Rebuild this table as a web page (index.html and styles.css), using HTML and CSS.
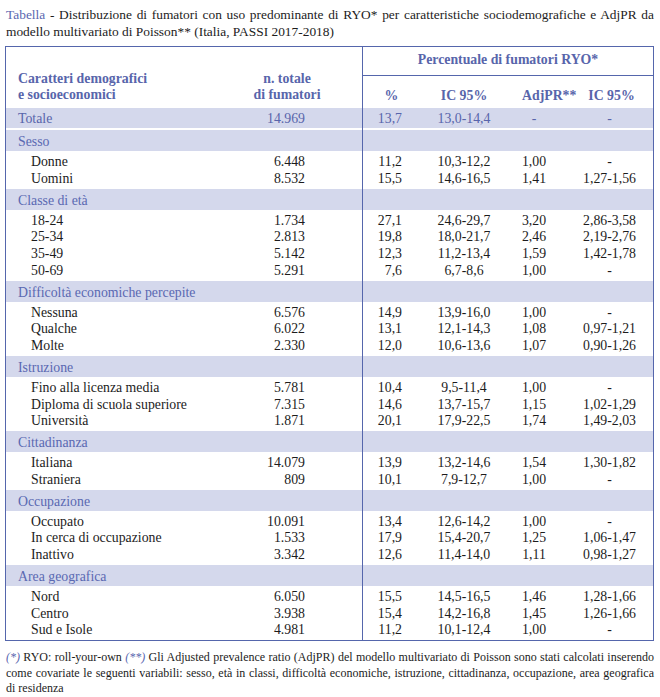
FILE: index.html
```html
<!DOCTYPE html>
<html lang="it">
<head>
<meta charset="utf-8">
<title>Tabella RYO</title>
<link rel="stylesheet" href="styles.css">
</head>
<body>
<div class="page">
  <div class="title">
    <span class="line just"><span class="tag">Tabella</span> - Distribuzione di fumatori con uso predominante di RYO* per caratteristiche sociodemografiche e AdjPR da</span>
    <span class="line">modello multivariato di Poisson** (Italia, PASSI 2017-2018)</span>
  </div>

  <div class="tbl">
    <div class="head">
      <div class="h-lab">Caratteri demografici<br>e socioeconomici</div>
      <div class="h-n">n. totale<br>di fumatori</div>
      <div class="h-top">Percentuale di fumatori RYO*</div>
      <div class="h-pct">%</div>
      <div class="h-ic">IC 95%</div>
      <div class="h-adj">AdjPR**</div>
      <div class="h-ic2">IC 95%</div>
    </div>

    <div class="r total">
      <div class="lab">Totale</div><div class="n">14.969</div><div class="pct">13,7</div><div class="ic">13,0-14,4</div><div class="adj">-</div><div class="ic2">-</div>
    </div>

    <div class="band"><div class="lab">Sesso</div><div class="rest"></div></div>
    <div class="grp">
      <div class="r"><div class="lab">Donne</div><div class="n">6.448</div><div class="pct">11,2</div><div class="ic">10,3-12,2</div><div class="adj">1,00</div><div class="ic2">-</div></div>
      <div class="r"><div class="lab">Uomini</div><div class="n">8.532</div><div class="pct">15,5</div><div class="ic">14,6-16,5</div><div class="adj">1,41</div><div class="ic2">1,27-1,56</div></div>
    </div>

    <div class="band"><div class="lab">Classe di età</div><div class="rest"></div></div>
    <div class="grp">
      <div class="r"><div class="lab">18-24</div><div class="n">1.734</div><div class="pct">27,1</div><div class="ic">24,6-29,7</div><div class="adj">3,20</div><div class="ic2">2,86-3,58</div></div>
      <div class="r"><div class="lab">25-34</div><div class="n">2.813</div><div class="pct">19,8</div><div class="ic">18,0-21,7</div><div class="adj">2,46</div><div class="ic2">2,19-2,76</div></div>
      <div class="r"><div class="lab">35-49</div><div class="n">5.142</div><div class="pct">12,3</div><div class="ic">11,2-13,4</div><div class="adj">1,59</div><div class="ic2">1,42-1,78</div></div>
      <div class="r"><div class="lab">50-69</div><div class="n">5.291</div><div class="pct">7,6</div><div class="ic">6,7-8,6</div><div class="adj">1,00</div><div class="ic2">-</div></div>
    </div>

    <div class="band"><div class="lab">Difficoltà economiche percepite</div><div class="rest"></div></div>
    <div class="grp">
      <div class="r"><div class="lab">Nessuna</div><div class="n">6.576</div><div class="pct">14,9</div><div class="ic">13,9-16,0</div><div class="adj">1,00</div><div class="ic2">-</div></div>
      <div class="r"><div class="lab">Qualche</div><div class="n">6.022</div><div class="pct">13,1</div><div class="ic">12,1-14,3</div><div class="adj">1,08</div><div class="ic2">0,97-1,21</div></div>
      <div class="r"><div class="lab">Molte</div><div class="n">2.330</div><div class="pct">12,0</div><div class="ic">10,6-13,6</div><div class="adj">1,07</div><div class="ic2">0,90-1,26</div></div>
    </div>

    <div class="band"><div class="lab">Istruzione</div><div class="rest"></div></div>
    <div class="grp">
      <div class="r"><div class="lab">Fino alla licenza media</div><div class="n">5.781</div><div class="pct">10,4</div><div class="ic">9,5-11,4</div><div class="adj">1,00</div><div class="ic2">-</div></div>
      <div class="r"><div class="lab">Diploma di scuola superiore</div><div class="n">7.315</div><div class="pct">14,6</div><div class="ic">13,7-15,7</div><div class="adj">1,15</div><div class="ic2">1,02-1,29</div></div>
      <div class="r"><div class="lab">Università</div><div class="n">1.871</div><div class="pct">20,1</div><div class="ic">17,9-22,5</div><div class="adj">1,74</div><div class="ic2">1,49-2,03</div></div>
    </div>

    <div class="band"><div class="lab">Cittadinanza</div><div class="rest"></div></div>
    <div class="grp">
      <div class="r"><div class="lab">Italiana</div><div class="n">14.079</div><div class="pct">13,9</div><div class="ic">13,2-14,6</div><div class="adj">1,54</div><div class="ic2">1,30-1,82</div></div>
      <div class="r"><div class="lab">Straniera</div><div class="n">809</div><div class="pct">10,1</div><div class="ic">7,9-12,7</div><div class="adj">1,00</div><div class="ic2">-</div></div>
    </div>

    <div class="band"><div class="lab">Occupazione</div><div class="rest"></div></div>
    <div class="grp">
      <div class="r"><div class="lab">Occupato</div><div class="n">10.091</div><div class="pct">13,4</div><div class="ic">12,6-14,2</div><div class="adj">1,00</div><div class="ic2">-</div></div>
      <div class="r"><div class="lab">In cerca di occupazione</div><div class="n">1.533</div><div class="pct">17,9</div><div class="ic">15,4-20,7</div><div class="adj">1,25</div><div class="ic2">1,06-1,47</div></div>
      <div class="r"><div class="lab">Inattivo</div><div class="n">3.342</div><div class="pct">12,6</div><div class="ic">11,4-14,0</div><div class="adj">1,11</div><div class="ic2">0,98-1,27</div></div>
    </div>

    <div class="band"><div class="lab">Area geografica</div><div class="rest"></div></div>
    <div class="grp">
      <div class="r"><div class="lab">Nord</div><div class="n">6.050</div><div class="pct">15,5</div><div class="ic">14,5-16,5</div><div class="adj">1,46</div><div class="ic2">1,28-1,66</div></div>
      <div class="r"><div class="lab">Centro</div><div class="n">3.938</div><div class="pct">15,4</div><div class="ic">14,2-16,8</div><div class="adj">1,45</div><div class="ic2">1,26-1,66</div></div>
      <div class="r"><div class="lab">Sud e Isole</div><div class="n">4.981</div><div class="pct">11,2</div><div class="ic">10,1-12,4</div><div class="adj">1,00</div><div class="ic2">-</div></div>
    </div>
  </div>

  <div class="notes">
    <span class="line just"><span class="mark">(*)</span> RYO: roll-your-own <span class="mark">(**)</span> Gli Adjusted prevalence ratio (AdjPR) del modello multivariato di Poisson sono stati calcolati inserendo</span>
    <span class="line just">come covariate le seguenti variabili: sesso, età in classi, difficoltà economiche, istruzione, cittadinanza, occupazione, area geografica</span>
    <span class="line">di residenza</span>
  </div>
</div>
</body>
</html>
```

FILE: styles.css
```css
* { box-sizing: border-box; }

body {
  margin: 0;
  background: #ffffff;
  font-family: "Liberation Serif", "Times New Roman", serif;
  color: #1c1c1c;
}

.page {
  width: 649px;
  margin: 0 0 0 5px;
  padding-top: 6px;
}

.line { display: block; }
.just { text-align: justify; text-align-last: justify; }

.title {
  font-size: 13.4px;
  line-height: 17px;
  padding-left: 1px;
}
.tag { color: #5a67b0; }

.tbl {
  margin-top: 6px;
  border: 1px solid #5566ac;
  font-size: 13.8px;
  line-height: 16.75px;
}

.head, .r, .band {
  display: grid;
  grid-template-columns: 206px 150px 58px 88px 62px 83px;
}

.head {
  grid-template-rows: 29px 32px;
  color: #5865ab;
  font-weight: bold;
  line-height: 16px;
}
.h-lab {
  grid-row: 1 / 3;
  grid-column: 1;
  align-self: end;
  padding: 0 0 5px 12px;
}
.h-n {
  grid-row: 1 / 3;
  grid-column: 2;
  align-self: end;
  text-align: center;
  padding: 0 0 5px 0;
}
.h-top {
  grid-row: 1;
  grid-column: 3 / 7;
  border-left: 1px solid #5566ac;
  border-bottom: 1px solid #5566ac;
  text-align: center;
  padding-top: 5px;
}
.h-pct, .h-ic, .h-adj, .h-ic2 {
  grid-row: 2;
  padding-top: 12px;
  text-align: center;
}
.h-pct { grid-column: 3; border-left: 1px solid #5566ac; }
.h-ic { grid-column: 4; }
.h-adj { grid-column: 5; padding-left: 14px; }
.h-ic2 { grid-column: 6; }

.r .lab { padding-left: 25px; white-space: nowrap; }
.r .n { text-align: right; padding-right: 57px; }
.r .pct { text-align: right; padding-right: 18px; border-left: 1px solid #5566ac; }
.r .ic { text-align: center; }
.r .adj { text-align: center; padding-right: 10px; }
.r .ic2 { text-align: center; padding-right: 4px; }

.r.total {
  height: 22px;
  line-height: 21px;
  color: #5865ab;
  background: linear-gradient(#d4d8ec 20px, #ffffff 20px);
}
.r.total .lab { padding-left: 12px; }

.band {
  height: 21px;
  line-height: 23px;
  background: #d4d8ec;
  color: #5a68b2;
  overflow: hidden;
}
.band .lab { grid-column: 1 / 3; padding-left: 12px; white-space: nowrap; }
.band .rest { grid-column: 3 / 7; border-left: 1px solid #5566ac; }

.grp .r:first-child > div { padding-top: 3px; }
.grp .r:last-child > div { padding-bottom: 1px; }

.notes {
  margin-top: 9px;
  font-size: 12px;
  line-height: 15.5px;
  padding-left: 1px;
  color: #1c1c1c;
}
.mark { color: #5a67b0; font-style: italic; }
```
